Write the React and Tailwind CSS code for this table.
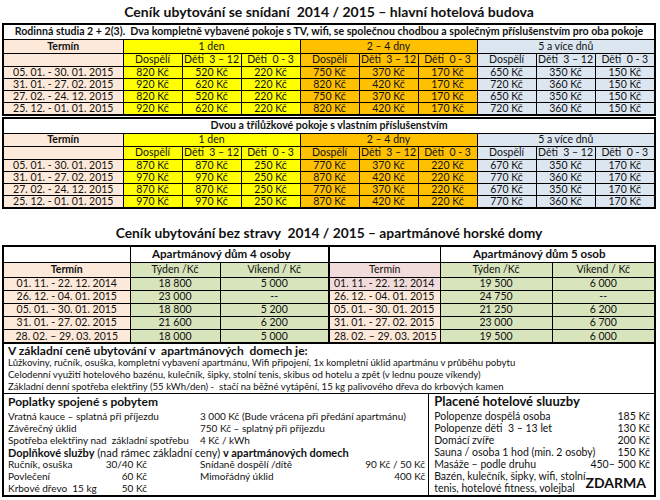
import React from 'react';

const groupBg = [
  'bg-[#ffff00]', 'bg-[#ffff00]', 'bg-[#ffff00]',
  'bg-[#ffc000]', 'bg-[#ffc000]', 'bg-[#ffc000]',
  'bg-[#dce6f1]', 'bg-[#dce6f1]', 'bg-[#dce6f1]',
];

const hotelRows1 = [
  ['05. 01. - 30. 01. 2015', ['820', '520', '220', '750', '370', '170', '650', '350', '150']],
  ['31. 01. - 27. 02. 2015', ['920', '620', '220', '820', '420', '170', '720', '360', '150']],
  ['27. 02. - 24. 12. 2015', ['820', '520', '220', '750', '370', '170', '650', '350', '150']],
  ['25. 12. - 01. 01. 2015', ['920', '620', '220', '820', '420', '170', '720', '360', '150']],
];

const hotelRows2 = [
  ['05. 01. - 30. 01. 2015', ['870', '870', '250', '770', '370', '220', '670', '350', '170']],
  ['31. 01. - 27. 02. 2015', ['970', '970', '250', '870', '420', '220', '770', '360', '170']],
  ['27. 02. - 24. 12. 2015', ['870', '870', '250', '770', '370', '220', '670', '350', '170']],
  ['25. 12. - 01. 01. 2015', ['970', '970', '250', '870', '420', '220', '770', '360', '170']],
];

const apDates = [
  '01. 11. - 22. 12. 2014',
  '26. 12. - 04. 01. 2015',
  '05. 01. - 30. 01. 2015',
  '31. 01. - 27. 02. 2015',
  '28. 02. – 29. 03. 2015',
];
const ap4 = [['18 800', '5 000'], ['23 000', '--'], ['18 800', '5 200'], ['21 600', '6 200'], ['18 000', '5 000']];
const ap5 = [['19 500', '6 000'], ['24 750', '--'], ['21 250', '6 200'], ['23 000', '6 700'], ['19 500', '6 000']];

const cell = 'border border-black p-0 text-center whitespace-pre';

const HotelTable = ({ title, rows, rowH, headH }) => (
  <div className="border-2 border-black">
    <table className="w-full table-fixed border-collapse border-hidden text-[10.5px] leading-none">
      <colgroup>
        <col className="w-[119px]" />
        {groupBg.map((_, i) => <col key={i} />)}
      </colgroup>
      <tbody>
        <tr className={rowH}>
          <td colSpan={10} className={`${cell} text-[10.6px] font-bold`}>{title}</td>
        </tr>
        <tr className={headH}>
          <td className={`${cell} bg-[#fde9d9] font-bold`}>Termín</td>
          <td colSpan={3} className={`${cell} bg-[#ffff00]`}>1 den</td>
          <td colSpan={3} className={`${cell} bg-[#ffc000]`}>2 – 4 dny</td>
          <td colSpan={3} className={`${cell} bg-[#dce6f1]`}>5 a více dnů</td>
        </tr>
        <tr className="h-[13px]">
          <td className={`${cell} bg-[#fde9d9]`}></td>
          {groupBg.map((bg, i) => (
            <td key={i} className={`${cell} ${bg}`}>
              {['Dospělí', 'Děti  3 – 12', 'Děti  0 - 3'][i % 3]}
            </td>
          ))}
        </tr>
        {rows.map(([date, prices]) => (
          <tr key={date} className="h-[12px]">
            <td className={`${cell} bg-[#fde9d9]`}>{date}</td>
            {prices.map((p, i) => (
              <td key={i} className={`${cell} ${groupBg[i]}`}>{p} Kč</td>
            ))}
          </tr>
        ))}
      </tbody>
    </table>
  </div>
);

const ApartmentTable = ({ title, data, cols, right }) => (
  <table className="w-full table-fixed border-collapse border-hidden text-[10.5px] leading-none">
    <colgroup>
      <col className={cols[0]} />
      <col className={cols[1]} />
      <col />
    </colgroup>
    <tbody>
      <tr className="h-[15px]">
        <td className={`${cell} bg-white`}></td>
        <td colSpan={2} className={`${cell} text-[11.6px] font-bold`}>
          <span className="relative left-[-8px]">{title}</span>
        </td>
      </tr>
      <tr className="h-[15px]">
        <td className={`${cell} ${right ? 'bg-[#f2dcdb]' : 'bg-[#fde9d9] font-bold'}`}>Termín</td>
        <td className={`${cell} bg-[#d8e4bc]`}>Týden /Kč</td>
        <td className={`${cell} bg-[#d8e4bc]`}>Víkend / Kč</td>
      </tr>
      {data.map(([week, weekend], i) => (
        <tr key={i} className="h-[13px]">
          <td
            className={`${cell} ${right ? 'text-left pl-[4px]' : ''} ${
              right && i === 0 ? 'bg-[#f2dcdb]' : 'bg-[#fde9d9]'
            }`}
          >
            {apDates[i]}
          </td>
          <td className={`${cell} bg-[#d8e4bc]`}>{week}</td>
          <td className={`${cell} bg-[#d8e4bc]`}>{weekend}</td>
        </tr>
      ))}
    </tbody>
  </table>
);

const Row = ({ children, className = '' }) => (
  <div className={`flex h-[12px] items-center whitespace-nowrap leading-none ${className}`}>{children}</div>
);

export default function App() {
  return (
    <div className="w-[660px] h-[500px] overflow-hidden bg-white text-[#111] font-['Lato','Open_Sans',sans-serif]">
      <div className="ml-[2px] w-[654px]">
        {/* Hotel */}
        <div className="flex h-[23px] items-center justify-center whitespace-pre text-[14px] font-bold">
          Ceník ubytování se snídaní  2014 / 2015 – hlavní hotelová budova
        </div>
        <HotelTable
          title="Rodinná studia 2 + 2(3).  Dva kompletně vybavené pokoje s TV, wifi, se společnou chodbou a společným příslušenstvím pro oba pokoje"
          rows={hotelRows1}
          rowH="h-[14px]"
          headH="h-[14px]"
        />
        <div className="mt-[1px]">
          <HotelTable
            title="Dvou a třílůžkové pokoje s vlastním příslušenstvím"
            rows={hotelRows2}
            rowH="h-[14px]"
            headH="h-[13px]"
          />
        </div>

        {/* Apartments */}
        <div className="flex h-[36px] items-end justify-center whitespace-pre pb-[1px] text-[13.8px] font-bold">
          Ceník ubytování bez stravy  2014 / 2015 – apartmánové horské domy
        </div>
        <div className="flex border-2 border-black">
          <div className="w-[326px] border-r-2 border-black">
            <ApartmentTable title="Apartmánový dům 4 osoby" data={ap4} cols={['w-[126px]', 'w-[90px]']} />
          </div>
          <div className="flex-1">
            <ApartmentTable title="Apartmánový dům 5 osob" data={ap5} cols={['w-[110px]', 'w-[112px]']} right />
          </div>
        </div>

        {/* Info */}
        <div className="border-2 border-t-0 border-black text-[10px]">
          <div className="border-b border-black px-[4px]">
            <div className="flex h-[13px] items-center whitespace-pre text-[12px] font-bold">
              V základní ceně ubytování v  apartmánových  domech je:
            </div>
            <Row className="text-[9.6px]">Lůžkoviny, ručník, osuška, kompletní vybavení apartmánu, Wifi připojení, 1x kompletní úklid apartmánu v průběhu pobytu</Row>
            <Row className="text-[9.6px]">Celodenní využití hotelového bazénu, kulečník, šipky, stolní tenis, skibus od hotelu a zpět (v lednu pouze víkendy)</Row>
            <Row className="whitespace-pre text-[9.6px]">Základní denní spotřeba elektřiny (55 kWh/den) -  stačí na běžné vytápění, 15 kg palivového dřeva do krbových kamen</Row>
          </div>
          <div className="flex h-[101px]">
            <div className="w-[435px] border-r border-black pl-[4px] pr-[3px]">
              <div className="flex h-[16px] items-center text-[12px] font-bold">Poplatky spojené s pobytem</div>
              <Row>
                <div className="w-[192px]">Vratná kauce – splatná při příjezdu</div>
                <div>3 000 Kč (Bude vrácena při předání apartmánu)</div>
              </Row>
              <Row>
                <div className="w-[192px]">Závěrečný úklid</div>
                <div>750 Kč – splatný při příjezdu</div>
              </Row>
              <Row>
                <div className="w-[192px] whitespace-pre">Spotřeba elektřiny nad  základní spotřebu</div>
                <div>4 Kč / kWh</div>
              </Row>
              <Row className="text-[11px]">
                <span className="font-bold">Doplňkové služby</span>
                <span className="whitespace-pre"> (nad rámec základní ceny) </span>
                <span className="font-bold">v apartmánových domech</span>
              </Row>
              <Row>
                <div className="flex w-[139px] shrink-0 justify-between">
                  <span>Ručník, osuška</span>
                  <span>30/40 Kč</span>
                </div>
                <div className="flex flex-1 justify-between pl-[53px]">
                  <span>Snídaně dospělí /dítě</span>
                  <span>90 Kč / 50 Kč</span>
                </div>
              </Row>
              <Row>
                <div className="flex w-[139px] shrink-0 justify-between">
                  <span>Povlečení</span>
                  <span>60 Kč</span>
                </div>
                <div className="flex flex-1 justify-between pl-[53px]">
                  <span>Mimořádný úklid</span>
                  <span>400 Kč</span>
                </div>
              </Row>
              <Row>
                <div className="flex w-[139px] shrink-0 justify-between">
                  <span className="whitespace-pre">Krbové dřevo  15 kg</span>
                  <span>50 Kč</span>
                </div>
              </Row>
            </div>
            <div className="flex-1 pl-[5px] pr-[4px] text-[10.5px]">
              <div className="flex h-[16px] items-center text-[13px] font-bold">Placené hotelové sluuzby</div>
              <Row className="justify-between"><span>Polopenze dospělá osoba</span><span>185 Kč</span></Row>
              <Row className="justify-between"><span className="whitespace-pre">Polopenze děti  3 – 13 let</span><span>130 Kč</span></Row>
              <Row className="justify-between"><span>Domácí zvíře</span><span>200 Kč</span></Row>
              <Row className="justify-between"><span>Sauna / osoba 1 hod (min. 2 osoby)</span><span>150 Kč</span></Row>
              <Row className="justify-between"><span>Masáže – podle druhu</span><span>450– 500 Kč</span></Row>
              <div className="flex items-center justify-between whitespace-nowrap">
                <div className="leading-[12px]">
                  <div>Bazén, kulečník, šipky, wifi, stolní</div>
                  <div>tenis, hotelové fitness, volejbal</div>
                </div>
                <span className="pr-[4px] text-[14px] font-bold">ZDARMA</span>
              </div>
            </div>
          </div>
        </div>
      </div>
    </div>
  );
}
